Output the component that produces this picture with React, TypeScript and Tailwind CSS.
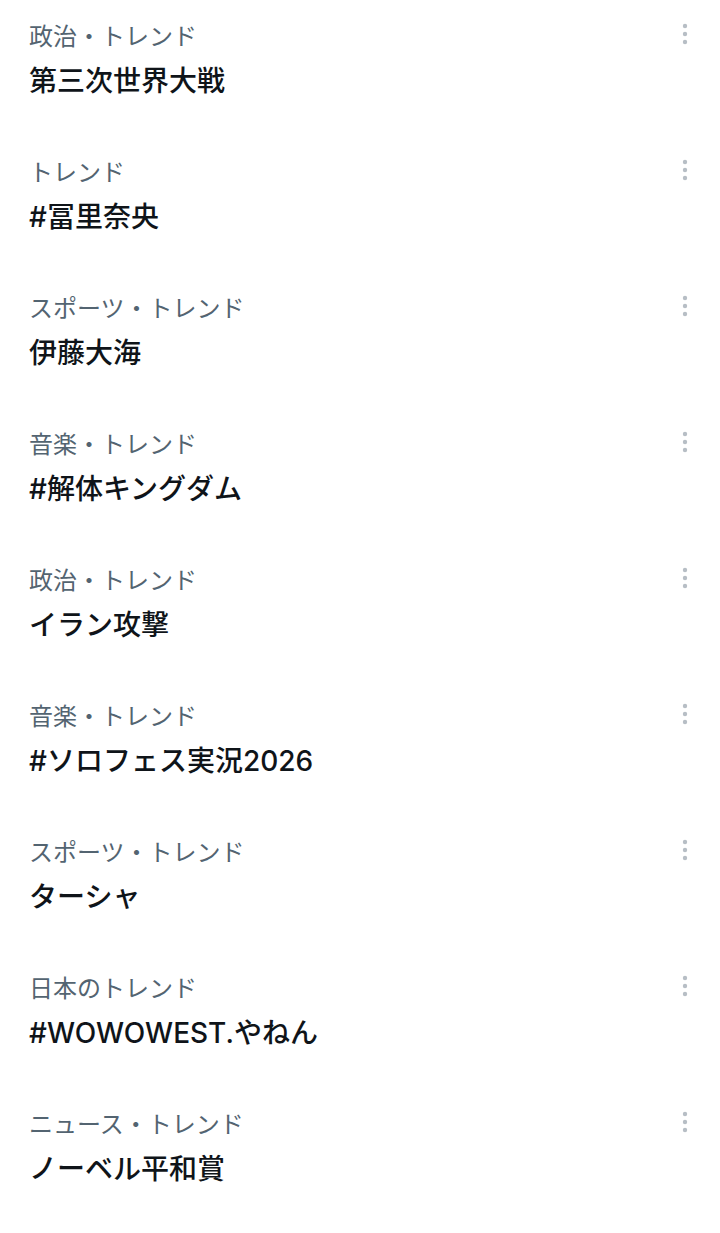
const trends = [
  { category: '政治・トレンド', title: '第三次世界大戦' },
  { category: 'トレンド', title: '#冨里奈央' },
  { category: 'スポーツ・トレンド', title: '伊藤大海' },
  { category: '音楽・トレンド', title: '#解体キングダム' },
  { category: '政治・トレンド', title: 'イラン攻撃' },
  { category: '音楽・トレンド', title: '#ソロフェス実況2026' },
  { category: 'スポーツ・トレンド', title: 'ターシャ' },
  { category: '日本のトレンド', title: '#WOWOWEST.やねん' },
  { category: 'ニュース・トレンド', title: 'ノーベル平和賞' },
]

function MoreIcon() {
  return (
    <svg width="8" height="24" viewBox="0 0 8 24" className="mt-[22px] shrink-0">
      <circle cx="4" cy="4" r="2.2" fill="#b7bec5" />
      <circle cx="4" cy="12" r="2.2" fill="#b7bec5" />
      <circle cx="4" cy="20" r="2.2" fill="#b7bec5" />
    </svg>
  )
}

function TrendRow({ category, title }: { category: string; title: string }) {
  return (
    <div className="flex items-start justify-between h-[136px] pl-[29px] pr-[31px]">
      <div className="pt-[21px]">
        {/* category line */}
        <div className="text-[24px] leading-[32px] text-[#536471]">{category}</div>
        {/* trend name */}
        <div className="mt-[8px] text-[28px] leading-[40px] font-medium text-[#0f1419]">
          {title}
        </div>
      </div>
      <MoreIcon />
    </div>
  )
}

export default function App() {
  return (
    <div
      className="w-[720px] min-h-[1233px] bg-white"
      style={{ fontFamily: 'Inter, "Noto Sans CJK JP", sans-serif' }}
    >
      {trends.map((t, i) => (
        <TrendRow key={i} category={t.category} title={t.title} />
      ))}
    </div>
  )
}
